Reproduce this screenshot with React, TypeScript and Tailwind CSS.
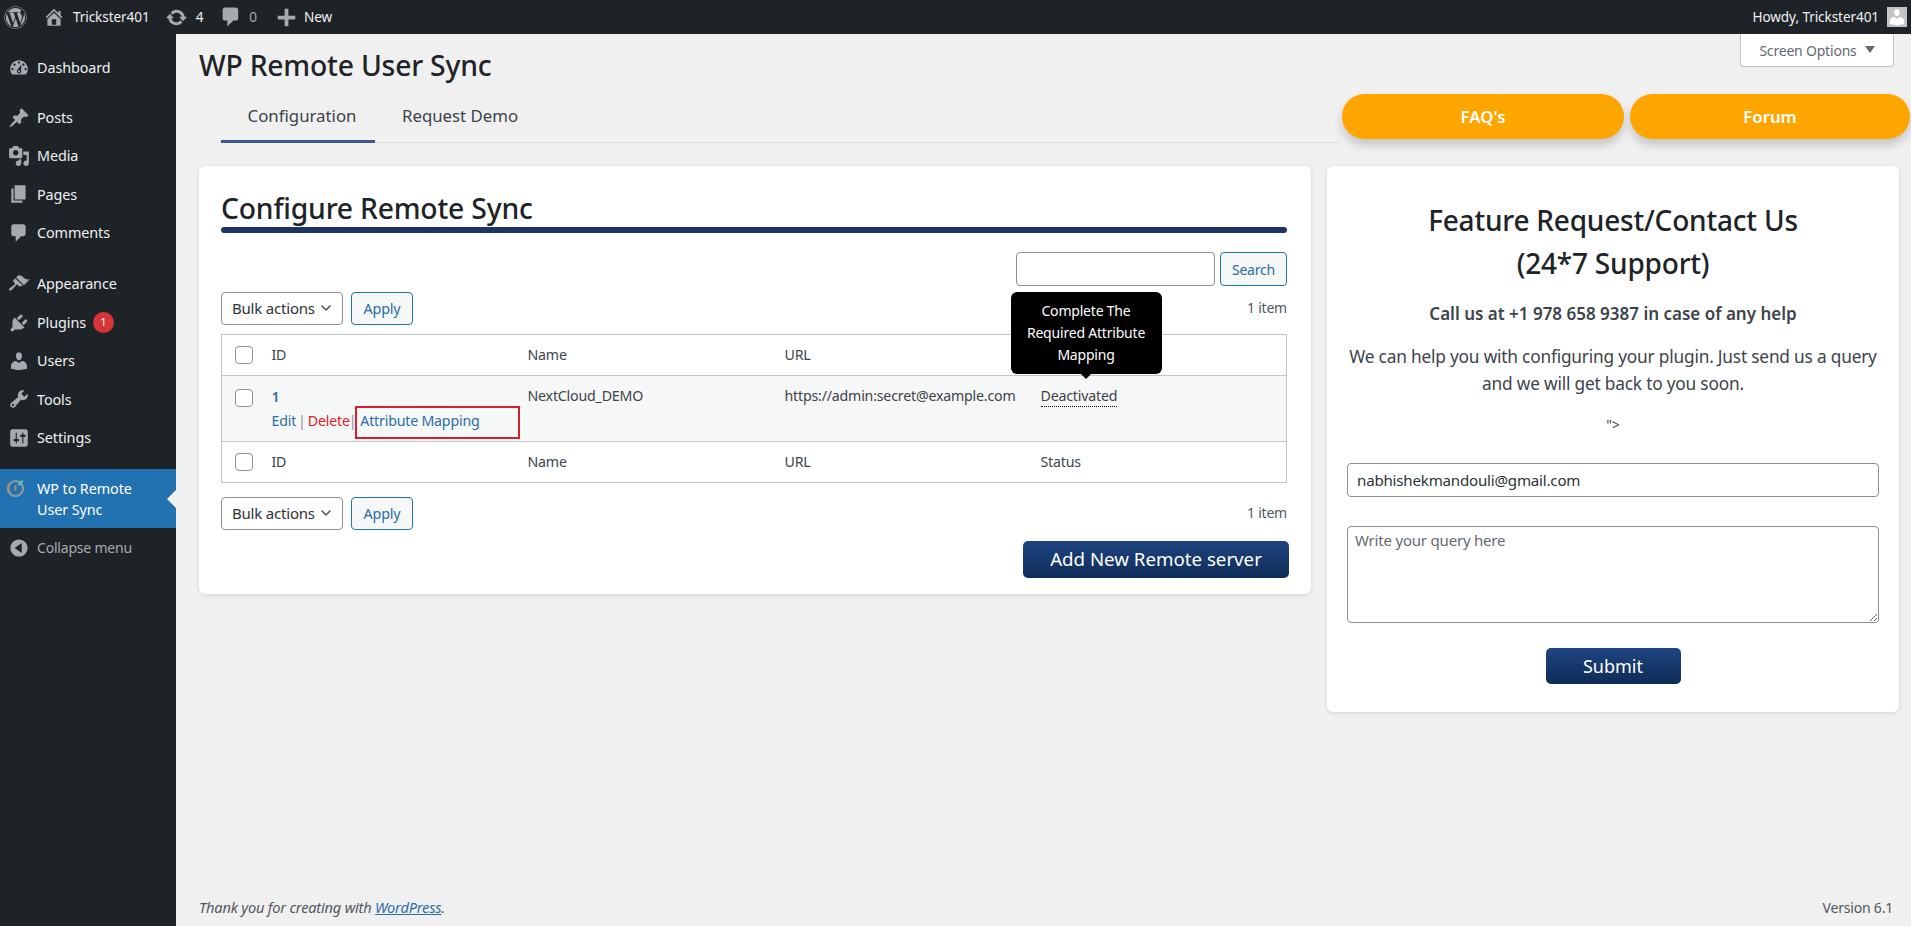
import { ChevronDown } from "lucide-react";
import { FaWordpress } from "react-icons/fa";
import type { ReactNode } from "react";

const paths: Record<string, string> = {
  home: "M16 8.5l1.53 1.53-1.06 1.06L10 4.62l-6.47 6.47-1.06-1.06L10 2.5l4 4v-2h2v4zm-6-2.46l6 5.99V18H4v-5.97zM12 17v-5H8v5h4z",
  update: "M10.2 3.28c3.53 0 6.43 2.61 6.92 6h2.08l-3.5 4-3.5-4h2.32c-.45-1.97-2.21-3.45-4.32-3.45-1.45 0-2.73.71-3.54 1.78L4.95 5.66C6.23 4.2 8.11 3.28 10.2 3.28zm-.4 13.44c-3.52 0-6.43-2.61-6.92-6H.8l3.5-4c1.17 1.33 2.33 2.67 3.5 4H5.48c.45 1.97 2.21 3.45 4.32 3.45 1.45 0 2.73-.71 3.54-1.78l1.71 1.95c-1.28 1.46-3.15 2.38-5.25 2.38z",
  comment: "M5 2h9c1.1 0 2 .9 2 2v7c0 1.1-.9 2-2 2h-2l-5 5v-5H5c-1.1 0-2-.9-2-2V4c0-1.1.9-2 2-2z",
  plus: "M17 8.5v3h-5.5V17h-3v-5.5H3v-3h5.5V3h3v5.5H17z",
  dashboard: "M3.76 16h12.48c1.1-1.37 1.76-3.11 1.76-5 0-4.42-3.58-8-8-8s-8 3.58-8 8c0 1.89.66 3.63 1.76 5zM10 4c.55 0 1 .45 1 1s-.45 1-1 1-1-.45-1-1 .45-1 1-1zM6 6c.55 0 1 .45 1 1s-.45 1-1 1-1-.45-1-1 .45-1 1-1zm8 0c.55 0 1 .45 1 1s-.45 1-1 1-1-.45-1-1 .45-1 1-1zm-5.37 5.55L12 7v6c0 1.1-.9 2-2 2s-2-.9-2-2c0-.57.24-1.08.63-1.45zM4 10c.55 0 1 .45 1 1s-.45 1-1 1-1-.45-1-1 .45-1 1-1zm12 0c.55 0 1 .45 1 1s-.45 1-1 1-1-.45-1-1 .45-1 1-1zm-5 3c0-.55-.45-1-1-1s-1 .45-1 1 .45 1 1 1 1-.45 1-1z",
  post: "M10.44 3.02l1.82-1.82 6.36 6.35-1.83 1.82c-1.05-.68-2.48-.57-3.41.36l-.75.75c-.92.93-1.04 2.35-.35 3.41l-1.83 1.82-2.41-2.41-2.8 2.79c-.42.42-3.38 2.71-3.8 2.29s1.86-3.39 2.28-3.81l2.79-2.79L4.1 9.36l1.83-1.82c1.05.69 2.48.57 3.4-.36l.75-.75c.93-.92 1.05-2.35.36-3.41z",
  media: "M13 11V4c0-.55-.45-1-1-1h-1.67L9 1H5L3.67 3H2c-.55 0-1 .45-1 1v7c0 .55.45 1 1 1h10c.55 0 1-.45 1-1zM7 4.5c1.38 0 2.5 1.12 2.5 2.5S8.38 9.5 7 9.5 4.5 8.38 4.5 7 5.62 4.5 7 4.5zM14 6h5v10.5c0 1.38-1.12 2.5-2.5 2.5S14 17.88 14 16.5s1.12-2.5 2.5-2.5c.17 0 .34.02.5.05V9h-3V6zm-4 8.05V13h2v3.5c0 1.38-1.12 2.5-2.5 2.5S7 17.88 7 16.5 8.12 14 9.5 14c.17 0 .34.02.5.05z",
  page: "M6 15V2h10v13H6zm-1 1h8v2H3V5h2v11z",
  appearance: "M14.48 11.06L7.41 3.99l1.5-1.5c.5-.56 2.3-.47 3.51.32 1.21.8 1.43 1.28 2.91 2.1 1.18.64 2.45 1.26 4.45.85zm-.71.71L6.7 4.7 4.93 6.47c-.39.39-.39 1.02 0 1.41l1.06 1.06c.39.39.39 1.03 0 1.42-.6.6-1.43 1.11-2.21 1.69-.35.26-.7.53-1.01.84C1.43 13.23.4 14.98 1.1 15.7c.71.71 2.46-.32 3.82-1.67.31-.31.58-.66.84-1.01.58-.78 1.09-1.61 1.69-2.21.39-.39 1.02-.39 1.41 0l1.06 1.06c.39.39 1.02.39 1.41 0z",
  plugin: "M13.11 4.36L9.87 7.6 8 5.73l3.24-3.24c.35-.34 1.05-.2 1.56.32.52.51.66 1.21.31 1.55zm-8 1.77l.91-1.12 9.01 9.01-1.19.84c-.71.71-2.63 1.16-3.82 1.16H6.14L4.9 17.26c-.59.59-1.54.59-2.12 0-.59-.58-.59-1.53 0-2.12l1.24-1.24v-3.88c0-1.13.4-3.19 1.09-3.89zm7.26 3.97l3.24-3.24c.34-.35 1.04-.21 1.55.31.52.51.66 1.21.31 1.55l-3.24 3.25z",
  users: "M10 9.25c-2.27 0-2.73-3.44-2.73-3.44C7 4.02 7.82 2 9.97 2c2.16 0 2.98 2.02 2.71 3.81 0 0-.41 3.44-2.68 3.44zm0 2.57L12.72 10c2.39 0 4.52 2.33 4.52 4.53v2.49s-3.65 1.13-7.24 1.13c-3.65 0-7.24-1.13-7.24-1.13v-2.49c0-2.25 1.94-4.48 4.47-4.48z",
  tools: "M16.68 9.77c-1.34 1.34-3.3 1.67-4.95.99l-5.41 6.52c-.99.99-2.59.99-3.58 0s-.99-2.59 0-3.57l6.52-5.42c-.68-1.65-.35-3.61.99-4.95 1.28-1.28 3.12-1.62 4.72-1.06l-2.89 2.89 2.82 2.82 2.86-2.87c.53 1.58.18 3.39-1.08 4.65zM3.81 16.21c.4.39 1.04.39 1.43 0 .4-.4.4-1.04 0-1.43-.39-.4-1.03-.4-1.43 0-.39.39-.39 1.03 0 1.43z",
  settings: "M18 16V4c0-1.1-.9-2-2-2H4c-1.1 0-2 .9-2 2v12c0 1.1.9 2 2 2h12c1.1 0 2-.9 2-2zM8 11h1c.55 0 1 .45 1 1s-.45 1-1 1H8v1.5c0 .28-.22.5-.5.5s-.5-.22-.5-.5V13H6c-.55 0-1-.45-1-1s.45-1 1-1h1V5.5c0-.28.22-.5.5-.5s.5.22.5.5V11zm5-2h-1c-.55 0-1-.45-1-1s.45-1 1-1h1V5.5c0-.28.22-.5.5-.5s.5.22.5.5V7h1c.55 0 1 .45 1 1s-.45 1-1 1h-1v5.5c0 .28-.22.5-.5.5s-.5-.22-.5-.5V9z",
  collapse: "M10 2.16c4.33 0 7.84 3.51 7.84 7.84s-3.51 7.84-7.84 7.84S2.16 14.33 2.16 10 5.67 2.16 10 2.16zM12.5 14.5v-9L6 10z",
};

function Dash({ name, className }: { name: string; className?: string }) {
  return (
    <svg viewBox="0 0 20 20" fill="currentColor" fillRule="evenodd" className={className}>
      <path d={paths[name]} />
    </svg>
  );
}

function MenuItem({ icon, label, badge }: { icon: string; label: string; badge?: string }) {
  return (
    <a className="flex h-[38.4px] items-center text-[14.4px] tracking-[-0.1px] text-[#f0f0f1]">
      <span className="flex w-[37px] shrink-0 justify-center pl-[1px] text-[#a7aaad]">
        <Dash name={icon} className="h-[22px] w-[22px]" />
      </span>
      {label}
      {badge && (
        <span className="ml-[7px] flex h-[21px] w-[21px] items-center justify-center rounded-full bg-[#d63638] text-[11px] text-white">
          {badge}
        </span>
      )}
    </a>
  );
}

function BulkRow({ children }: { children?: ReactNode }) {
  return (
    <div className="flex h-[33px] items-center gap-[8px]">
      <div className="relative">
        <select className="h-[33px] w-[122px] appearance-none rounded-[4px] border border-[#8c8f94] bg-white pl-[10px] text-[15px] tracking-[-0.2px] text-[#2c3338]">
          <option>Bulk actions</option>
        </select>
        <ChevronDown className="pointer-events-none absolute right-[9px] top-[8px] h-[16px] w-[16px] text-[#50575e]" strokeWidth={2.4} />
      </div>
      <button className="h-[33px] w-[62px] rounded-[4px] border border-[#2271b1] bg-[#f6f7f7] text-[14.4px] tracking-[-0.2px] text-[#2b6da6]">
        Apply
      </button>
      <span className="mb-[2px] ml-auto text-[14px] tracking-[-0.2px] text-[#50575e]">{children}</span>
    </div>
  );
}

// the top Status label sits behind the tooltip, so only the footer row prints it
function HeaderRow({ footer }: { footer?: boolean }) {
  return (
    <tr className={footer ? "h-[41px] border-t border-[#c3c4c7]" : "h-[41px]"}>
      <td className="pl-[13px]">
        <span className="block h-[18px] w-[18px] rounded-[4px] border border-[#8c8f94] bg-white" />
      </td>
      <td>ID</td>
      <td>Name</td>
      <td>URL</td>
      <td>{footer && "Status"}</td>
    </tr>
  );
}

export default function App() {
  return (
    <div className="flex h-[926px] flex-col overflow-hidden bg-[#f0f0f1] font-['Noto_Sans','Open_Sans',sans-serif] text-[#3c434a]">
      <header className="flex h-[34px] shrink-0 items-center bg-[#1d2327] text-[13.6px] tracking-[-0.1px] text-[#f0f0f1]">
        <FaWordpress className="ml-[4px] h-[23px] w-[23px] text-[#a7aaad]" />
        <Dash name="home" className="ml-[16px] h-[22px] w-[22px] text-[#a7aaad]" />
        <span className="ml-[8px]">Trickster401</span>
        <Dash name="update" className="ml-[15px] h-[23px] w-[23px] text-[#a7aaad]" />
        <span className="ml-[8px]">4</span>
        <Dash name="comment" className="ml-[16px] h-[24px] w-[24px] text-[#a7aaad]" />
        <span className="ml-[6px] text-[#a7aaad]">0</span>
        <Dash name="plus" className="ml-[17px] h-[25px] w-[25px] text-[#a7aaad]" />
        <span className="ml-[5px]">New</span>
        <span className="ml-auto">Howdy, Trickster401</span>
        <span className="ml-[8px] mr-[4px] flex h-[20px] w-[20px] items-end justify-center overflow-hidden bg-[#c4c4c4]">
          <Dash name="users" className="h-[20px] w-[20px] text-white" />
        </span>
      </header>

      <div className="flex min-h-0 flex-1">
        <aside className="flex w-[176px] shrink-0 flex-col bg-[#1d2327] pt-[15px]">
          <MenuItem icon="dashboard" label="Dashboard" />
          <div className="mt-[11px]">
            <MenuItem icon="post" label="Posts" />
            <MenuItem icon="media" label="Media" />
            <MenuItem icon="page" label="Pages" />
            <MenuItem icon="comment" label="Comments" />
          </div>
          <div className="mt-[13px]">
            <MenuItem icon="appearance" label="Appearance" />
            <MenuItem icon="plugin" label="Plugins" badge="1" />
            <MenuItem icon="users" label="Users" />
            <MenuItem icon="tools" label="Tools" />
            <MenuItem icon="settings" label="Settings" />
          </div>
          <a className="relative mt-[12px] flex h-[59px] items-center bg-[#2271b1] text-[14.4px] leading-[21px] tracking-[-0.1px] text-white">
            <span className="flex w-[37px] shrink-0 self-start pl-[6px] pt-[9px]">
              <svg viewBox="0 0 20 20" className="h-[20px] w-[20px]" fill="none">
                <circle cx="9.5" cy="10.5" r="7.5" stroke="#8f9aa6" strokeWidth="2.2" />
                <path d="M9.5 12V8" stroke="#b98a5e" strokeWidth="2" strokeLinecap="round" />
                <path d="M3.5 14.5a7.5 7.500 0 0 1 0-8" stroke="#b0906f" strokeWidth="2.2" />
                <path d="M13 6.500l3-3" stroke="#5fc9a8" strokeWidth="2.4" strokeLinecap="round" />
              </svg>
            </span>
            <span className="pt-[2px]">WP to Remote<br />User Sync</span>
            <span className="absolute right-0 top-[21px] border-y-[9px] border-r-[9px] border-y-transparent border-r-[#f0f0f1]" />
          </a>
          <a className="mt-px flex h-[38px] items-center text-[14px] tracking-[-0.2px] text-[#a7aaad]">
            <span className="flex w-[37px] shrink-0 justify-center">
              <Dash name="collapse" className="h-[22px] w-[22px]" />
            </span>
            Collapse menu
          </a>
        </aside>

        <main className="relative flex min-w-0 flex-1 flex-col pl-[23px] pr-px">
          <button className="absolute right-[17px] top-0 flex h-[33px] w-[154px] items-center justify-center gap-[8px] rounded-b-[4px] border border-t-0 border-[#c3c4c7] bg-white text-[14px] tracking-[-0.2px] text-[#646970]">
            Screen Options
            <span className="mt-[-2px] border-x-[5px] border-t-[7px] border-x-transparent border-t-[#646970]" />
          </button>

          <h1 className="mt-[11px] h-[41px] text-[28.3px] font-medium leading-[40px] tracking-[-0.2px] text-[#1d2327]">
            WP Remote User Sync
          </h1>

          <div className="flex h-[57px] shrink-0">
            <nav className="ml-[22px] flex flex-1 border-b border-[#dcdcde] text-[16.8px] text-[#3c434a]">
              <a className="flex h-[57px] w-[154px] items-start justify-center border-b-[3px] border-[#3a5590] pl-[8px] pt-[17px] leading-[26px]">
                Configuration
              </a>
              <a className="ml-[27px] pt-[17px] leading-[26px]">Request Demo</a>
            </nav>
            <div className="ml-[2px] mt-[8px] flex h-[45px] gap-[6px]">
              <a className="flex h-[45px] w-[282px] items-center justify-center rounded-full bg-[#ffa500] text-[16.8px] font-semibold text-white shadow-[0_6px_10px_rgba(0,0,0,0.18)]">
                FAQ's
              </a>
              <a className="flex h-[45px] w-[280px] items-center justify-center rounded-full bg-[#ffa500] text-[16.8px] font-semibold text-white shadow-[0_6px_10px_rgba(0,0,0,0.18)]">
                Forum
              </a>
            </div>
          </div>

          <div className="mt-[23px] flex items-start gap-[16px]">
            <section className="h-[428px] w-[1112px] shrink-0 rounded-[6px] bg-white pl-[22px] pr-[24px] shadow-[0_1px_4px_rgba(0,0,0,0.12)]">
              <h2 className="flex h-[61px] items-end text-[28.3px] font-medium leading-[38px] tracking-[-0.2px] text-[#1d2327]">
                Configure Remote Sync
              </h2>
              <div className="h-[6px] rounded-full bg-[#1a3566]" />

              <div className="mt-[19px] flex h-[34px] justify-end gap-[5px]">
                <input className="h-[34px] w-[199px] rounded-[4px] border border-[#8c8f94] bg-white" />
                <button className="h-[34px] w-[67px] rounded-[4px] border border-[#2271b1] bg-[#f6f7f7] text-[14px] tracking-[-0.2px] text-[#2b6da6]">
                  Search
                </button>
              </div>

              <div className="mt-[6px]">
                <BulkRow>1 item</BulkRow>
              </div>

              <table className="mt-[9px] w-[1066px] table-fixed border-collapse border border-[#c3c4c7] text-[14.2px] tracking-[-0.2px]">
                <colgroup>
                  <col className="w-[50px]" />
                  <col className="w-[256px]" />
                  <col className="w-[257px]" />
                  <col className="w-[256px]" />
                  <col />
                </colgroup>
                <tbody>
                  <HeaderRow />
                  <tr className="h-[66px] border-t border-[#c3c4c7] bg-[#f6f7f7] align-top">
                    <td className="pl-[13px] pt-[13px]">
                      <span className="block h-[18px] w-[18px] rounded-[4px] border border-[#8c8f94] bg-white" />
                    </td>
                    <td className="pt-[11px]">
                      <a className="block font-semibold leading-[20px] text-[#2b6da6]">1</a>
                      <div className="mt-[-1px] flex h-[33px] items-start leading-[20px] text-[#2b6da6]">
                        <a className="mt-[5px]">Edit</a>
                        <span className="mx-[2px] mt-[5px] text-[#8c8f94]">|</span>
                        <a className="mt-[5px] text-[#e0202a]">Delete</a>
                        <span className="mx-[-1px] mt-[5px] text-[#8c8f94]">|</span>
                        <span className="block h-[33px] w-[165px] border-2 border-[#d6202f] pl-[3px] pt-[3px]">
                          <a>Attribute Mapping</a>
                        </span>
                      </div>
                    </td>
                    <td className="pt-[10px] leading-[20px]">NextCloud_DEMO</td>
                    <td className="whitespace-nowrap pt-[10px] leading-[20px]">https://admin:secret@example.com</td>
                    <td className="pt-[10px] leading-[20px]">
                      <span className="relative inline-block border-b border-dotted border-black">
                        Deactivated
                        <span className="absolute bottom-[32px] left-[-30px] w-[151px] rounded-[6px] bg-black px-[8px] py-[8px] text-center text-[14px] leading-[22px] text-white">
                          Complete The Required Attribute Mapping
                          <span className="absolute left-1/2 top-full ml-[-5px] border-x-[5px] border-t-[5px] border-x-transparent border-t-black" />
                        </span>
                      </span>
                    </td>
                  </tr>
                  <HeaderRow footer />
                </tbody>
              </table>

              <div className="mt-[14px]">
                <BulkRow>1 item</BulkRow>
              </div>

              <div className="mr-[-2px] mt-[11px] flex justify-end">
                <button className="h-[37px] w-[266px] rounded-[5px] bg-linear-to-b from-[#1e4480] to-[#0f2c58] text-[18.7px] text-white">
                  Add New Remote server
                </button>
              </div>
            </section>

            <section className="flex h-[546px] w-[572px] shrink-0 flex-col items-center rounded-[6px] bg-white px-[20px] text-center shadow-[0_1px_4px_rgba(0,0,0,0.12)]">
              <h2 className="mt-[33px] text-[28px] font-medium leading-[43px] tracking-[-0.2px] text-[#1d2327]">
                Feature Request/Contact Us
                <br />
                (24*7 Support)
              </h2>
              <p className="mt-[18px] text-[17px] font-semibold leading-[22px] text-[#3c434a]">
                Call us at +1 978 658 9387 in case of any help
              </p>
              <p className="mt-[19px] text-[17.3px] leading-[26.5px] tracking-[-0.2px] text-[#3c434a]">
                We can help you with configuring your plugin. Just send us a query
                <br />
                and we will get back to you soon.
              </p>
              <p className="mt-[18px] text-[14px] leading-[20px]">"&gt;</p>
              <input
                defaultValue="nabhishekmandouli@gmail.com"
                className="mt-[28px] h-[34px] w-[532px] shrink-0 rounded-[4px] border border-[#8c8f94] bg-white pl-[9px] text-[15.1px] tracking-[-0.2px] text-[#2c3338]"
              />
              <textarea
                placeholder="Write your query here"
                className="mt-[29px] h-[97px] w-[532px] shrink-0 rounded-[4px] border border-[#8c8f94] bg-white px-[7px] py-[2px] text-[15px] tracking-[-0.2px] text-[#2c3338] placeholder:text-[#646970]"
              />
              <button className="mt-[25px] h-[36px] w-[135px] rounded-[5px] bg-linear-to-b from-[#1e4480] to-[#0f2c58] text-[18px] text-white">
                Submit
              </button>
            </section>
          </div>

          <footer className="mr-[17px] mt-auto flex h-[37px] shrink-0 items-center justify-between text-[14px] tracking-[-0.2px] text-[#50575e]">
            <span className="text-[14.6px] italic">
              Thank you for creating with <a className="text-[#2b6da6] underline">WordPress</a>.
            </span>
            <span>Version 6.1</span>
          </footer>
        </main>
      </div>
    </div>
  );
}
